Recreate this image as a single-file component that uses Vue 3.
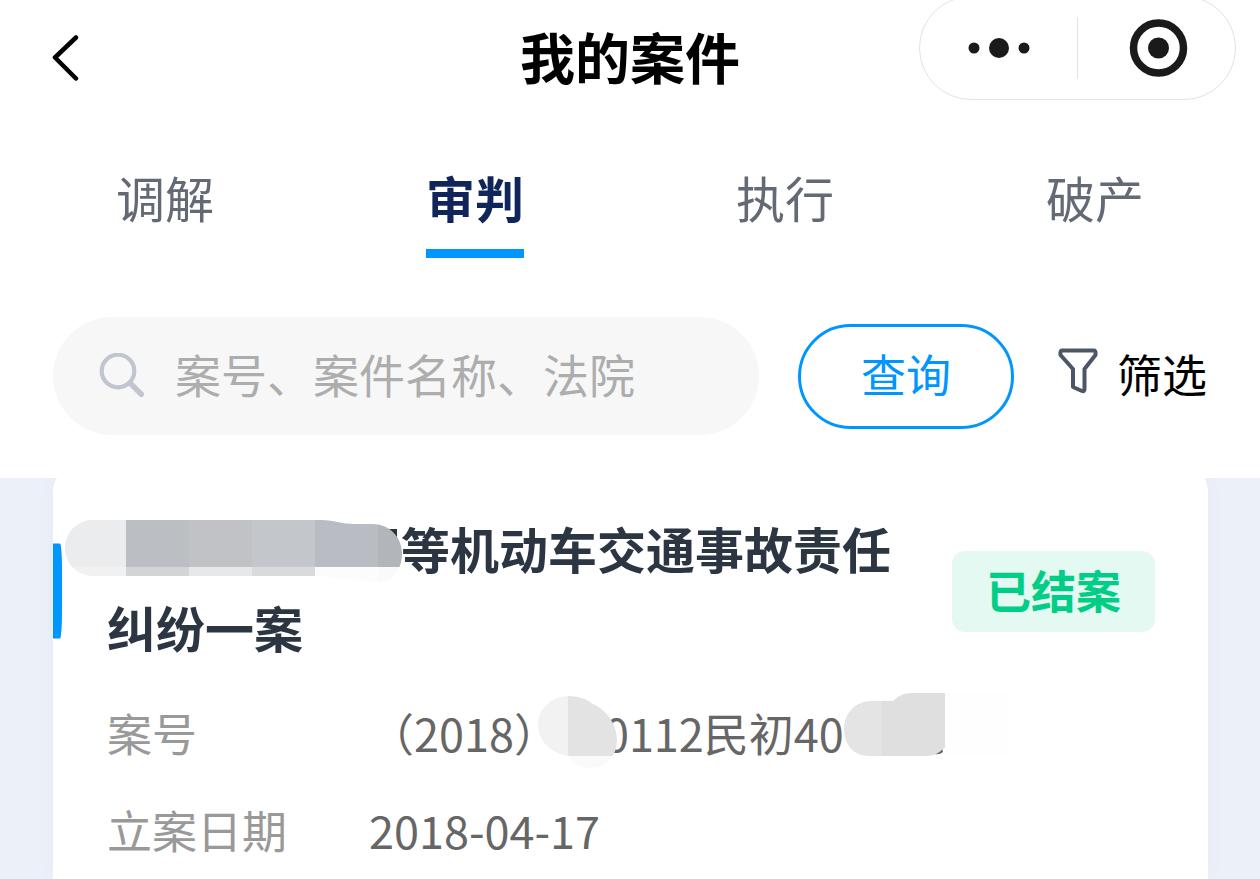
<template>
  <div class="case-page">
    <header class="case-header">
      <div class="nav-bar">
        <button type="button" class="nav-bar__back" aria-label="返回">
          <svg width="28" height="46" viewBox="0 0 28 46" fill="none" stroke="#000" stroke-width="4.500" stroke-linecap="round" stroke-linejoin="round">
            <path d="M24 2.500L3 22.500L24 43.500" />
          </svg>
        </button>
        <h1 class="nav-bar__title">我的案件</h1>
        <div class="capsule">
          <button type="button" class="capsule__btn" aria-label="更多">
            <svg width="62" height="20" viewBox="0 0 62 20" fill="#1a1a1a">
              <circle cx="6" cy="10" r="5.500" />
              <circle cx="31" cy="10" r="10" />
              <circle cx="56" cy="10" r="5.500" />
            </svg>
          </button>
          <span class="capsule__divider" />
          <button type="button" class="capsule__btn" aria-label="关闭">
            <svg width="62" height="58" viewBox="0 0 62 58">
              <circle cx="32.500" cy="29" r="25" fill="none" stroke="#1a1a1a" stroke-width="7.500" />
              <circle cx="32.500" cy="29" r="10.500" fill="#1a1a1a" />
            </svg>
          </button>
        </div>
      </div>

      <div class="tabs" role="tablist">
        <button
          v-for="tab in tabs"
          :key="tab"
          type="button"
          role="tab"
          class="tabs__item"
          :class="{ 'tabs__item--active': tab === activeTab }"
          :aria-selected="tab === activeTab"
          @click="activeTab = tab"
        >
          <span class="tabs__label">{{ tab }}</span>
        </button>
      </div>

      <form class="search" @submit.prevent>
        <label class="search__box">
          <svg width="46" height="46" viewBox="0 0 46 46" fill="none" stroke="#c0c5cf">
            <circle cx="19" cy="18" r="16.300" stroke-width="4.200" />
            <path d="M31 30L42.300 41.300" stroke-width="5.500" stroke-linecap="round" />
          </svg>
          <input v-model="keyword" type="text" class="search__input" aria-label="搜索案件" placeholder="案号、案件名称、法院">
        </label>
        <button type="submit" class="search__submit">查询</button>
        <button type="button" class="search__filter">
          <svg width="40" height="46" viewBox="0 0 40 46" fill="none" stroke="#4d5665" stroke-width="4" stroke-linejoin="round">
            <path d="M4 2.500H36Q38 2.500 37.500 7L26.500 21V41Q26.500 44 24 43L15 39V21L2.500 7Q2 2.500 4 2.500Z" />
          </svg>
          <span>筛选</span>
        </button>
      </form>
    </header>

    <main class="case-list">
      <article class="case-card">
        <div class="case-card__head">
          <h2 class="case-card__title">
            <span class="mask mask--name">
              <svg class="mask__shape" width="337" height="62" viewBox="0 0 337 62">
                <clipPath id="name-clip">
                  <path d="M27 0H257C269 0 276 4 290 4H308C325 4 337 18 337 33C337 50 328 62 312 62C299 62 294 59 282 59C270 59 264 56 250 56H27A27 28 0 0 1 27 0Z" />
                </clipPath>
                <path d="M321 9H332V17H328Z" fill="#2c3643" />
                <g clip-path="url(#name-clip)">
                  <template v-for="block in nameBlocks" :key="block.x">
                    <rect :x="block.x" y="0" width="63" height="47" :fill="block.top" />
                    <rect :x="block.x" y="47" width="63" height="15" :fill="block.bottom" />
                  </template>
                </g>
              </svg>
            </span>等机动车交通事故责任纠纷一案
          </h2>
          <span class="case-card__status">已结案</span>
        </div>

        <dl class="case-card__info">
          <div class="case-card__row">
            <dt>案号</dt>
            <dd>
              （2018）<span class="mask mask--court">
                <svg class="mask__shape" width="79" height="72" viewBox="0 0 79 72">
                  <clipPath id="court-clip">
                    <path d="M30 0C42 0 50 4 53 7C68 13 79 28 79 44C79 60 68 72 53 72C41 72 33 66 30 60C14 57 0 46 0 29C0 12 14 0 30 0Z" />
                  </clipPath>
                  <g clip-path="url(#court-clip)">
                    <rect width="30" height="60" fill="#f2f2f2" />
                    <rect x="30" width="49" height="60" fill="#e3e3e3" />
                    <rect y="60" width="79" height="12" fill="#fafafa" />
                  </g>
                </svg>
              </span>0112民初40<span class="mask mask--number">
                <svg class="mask__shape" width="176" height="64" viewBox="0 0 176 64">
                  <clipPath id="number-clip">
                    <path d="M27 8H49C54 3 60 0 68 0H101V55C96 57 94 63 82 63H25C10 63 0 52 0 36C0 20 12 8 27 8Z" />
                  </clipPath>
                  <path d="M101 0H164V63H101Z" fill="#fefefe" />
                  <path d="M90 61Q96 60 98 55L99 59Q96 62 90 61Z" fill="#666" />
                  <g clip-path="url(#number-clip)">
                    <rect width="38" height="63" fill="#e4e4e4" />
                    <rect x="38" width="63" height="63" fill="#dfdfdf" />
                  </g>
                </svg>
              </span>
            </dd>
          </div>
          <div class="case-card__row">
            <dt>立案日期</dt>
            <dd>2018-04-17</dd>
          </div>
        </dl>
      </article>
    </main>
  </div>
</template>

<script setup>
import { ref } from 'vue'

const tabs = ['调解', '审判', '执行', '破产']
const activeTab = ref('审判')
const keyword = ref('')

// mosaic colours over the party name
const nameBlocks = [
  { x: -2, top: '#ebecee', bottom: '#f1f1f2' },
  { x: 61, top: '#bbbfc4', bottom: '#d3d4d6' },
  { x: 124, top: '#c1c2c5', bottom: '#e7e8e9' },
  { x: 187, top: '#c3c6cb', bottom: '#d9dadc' },
  { x: 250, top: '#b9bdc3', bottom: '#fcfcfc' },
  { x: 313, top: '#b2b5ba', bottom: '#fafafa' }
]
</script>

<style>
body {
  margin: 0;
  background: #ecf0f9;
}
</style>

<style scoped>
.case-page {
  display: flex;
  flex-direction: column;
  min-height: 100vh;
  overflow: hidden;
  color: #000;
  font-family: "Noto Sans CJK SC", sans-serif;
}

button {
  padding: 0;
  border: none;
  background: transparent;
  color: inherit;
  font: inherit;
  cursor: pointer;
}

svg {
  display: block;
  flex: none;
}

.case-header {
  position: relative;
  z-index: 1;
  padding-bottom: 43px;
  background: #fff;
}

.nav-bar {
  display: grid;
  grid-template-columns: 1fr auto 1fr;
  align-items: center;
  height: 115px;
  padding: 0 24px;
}

.nav-bar__back {
  justify-self: start;
  padding-left: 28px;
}

.nav-bar__title {
  margin: 0;
  padding-bottom: 6px;
  font-size: 55px;
  line-height: 80px;
  font-weight: 700;
}

.capsule {
  display: flex;
  align-items: center;
  align-self: start;
  justify-self: end;
  box-sizing: border-box;
  width: 317px;
  height: 104px;
  margin-top: -4px;
  border: 1px solid #e2e2e2;
  border-radius: 52px;
}

.capsule__btn {
  display: flex;
  flex: 1;
  justify-content: center;
}

.capsule__divider {
  width: 1px;
  height: 62px;
  background: #e2e2e2;
}

.tabs {
  display: grid;
  grid-template-columns: repeat(4, 1fr);
  padding: 46px 10px 0;
}

.tabs__item {
  display: flex;
  justify-content: center;
  color: #636a75;
  font-size: 49px;
  line-height: 72px;
}

.tabs__label {
  padding-bottom: 16px;
  border-bottom: 9px solid transparent;
}

.tabs__item--active {
  color: #10265a;
  font-weight: 700;
}

.tabs__item--active .tabs__label {
  border-bottom-color: #0096ff;
}

.search {
  display: flex;
  align-items: center;
  margin-top: 59px;
  padding: 0 53px;
}

.search__box {
  display: flex;
  flex: 1;
  align-items: center;
  gap: 30px;
  box-sizing: border-box;
  min-width: 0;
  height: 118px;
  margin-right: 39px;
  padding: 0 46px;
  border-radius: 59px;
  background: #f7f7f7;
}

.search__input {
  flex: 1;
  min-width: 0;
  padding: 0 0 6px;
  border: none;
  outline: none;
  background: transparent;
  color: #000;
  font-family: inherit;
  font-size: 46px;
  line-height: 70px;
}

.search__input::placeholder {
  color: #adadad;
  opacity: 1;
}

.search__submit {
  box-sizing: border-box;
  width: 216px;
  height: 105px;
  margin-right: 44px;
  padding-bottom: 6px;
  border: 3px solid #0096ff;
  border-radius: 53px;
  color: #0096ff;
  font-size: 45px;
}

.search__filter {
  display: flex;
  align-items: center;
  gap: 19px;
  padding-bottom: 4px;
  font-size: 45px;
  line-height: 70px;
}

.search__filter svg {
  margin-bottom: 6px;
}

.case-list {
  display: flex;
  flex: 1;
  flex-direction: column;
  padding: 0 52px 0 53px;
  background: #ecf0f9;
}

.case-card {
  flex: 1;
  margin-top: -14px;
  padding-top: 44px;
  border-radius: 28px 28px 0 0;
  background: #fff;
  box-shadow: 0 0 20px rgba(60, 90, 140, 0.04);
}

.case-card__head {
  position: relative;
  display: flex;
  align-items: center;
  gap: 45px;
  padding: 0 53px 0 54px;
}

.case-card__head::before {
  content: '';
  position: absolute;
  top: 50%;
  left: 0;
  width: 9px;
  height: 95px;
  border-radius: 0 2px 2px 0 / 0 27px 27px 0;
  background: #0096ff;
  transform: translateY(-50%);
}

.case-card__title {
  flex: 1;
  margin: 0;
  padding-bottom: 8px;
  color: #2c3643;
  font-size: 49px;
  line-height: 79px;
  font-weight: 700;
}

.case-card__status {
  box-sizing: border-box;
  width: 203px;
  padding-bottom: 4px;
  border-radius: 13px;
  background: #e3f9f2;
  color: #00ce87;
  font-size: 45px;
  line-height: 77px;
  font-weight: 700;
  text-align: center;
}

.case-card__info {
  margin: 10px 0 0;
  padding: 0 53px 0 54px;
  font-size: 45px;
  line-height: 97px;
}

.case-card__row {
  display: flex;
}

.case-card__row dt {
  width: 262px;
  color: #999;
}

.case-card__row dd {
  margin: 0;
  color: #666;
}

.mask {
  position: relative;
  display: inline-block;
  vertical-align: top;
}

.mask__shape {
  position: absolute;
}

.mask--name {
  width: 6em;
  height: 79px;
}

.mask--name .mask__shape {
  top: 12px;
  left: -42px;
}

.mask--court {
  width: 1em;
  height: 97px;
}

.mask--court .mask__shape {
  top: 12px;
  left: -21px;
}

.mask--number {
  width: 2em;
  height: 97px;
}

.mask--number .mask__shape {
  top: 9px;
  left: 0;
}
</style>
